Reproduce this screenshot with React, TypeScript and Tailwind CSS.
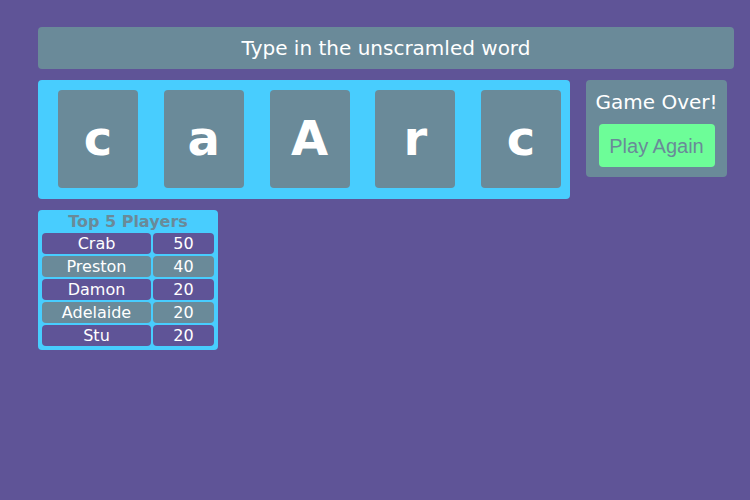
import { useState } from 'react';

const letters = ['c', 'a', 'A', 'r', 'c'];

const players = [
  { name: 'Crab', score: 50 },
  { name: 'Preston', score: 40 },
  { name: 'Damon', score: 20 },
  { name: 'Adelaide', score: 20 },
  { name: 'Stu', score: 20 },
];

export default function App() {
  const [tiles] = useState(letters);

  return (
    <div className="min-h-[500px] w-[750px] bg-[#5f5497] pl-[38px] pt-[27px] font-['DejaVu_Sans',sans-serif]">
      {/* Prompt bar */}
      <div className="flex h-[42px] w-[696px] items-center justify-center rounded-[4px] bg-[#6a8a99] text-[20px] text-white">
        Type in the unscramled word
      </div>

      <div className="mt-[11px] flex items-start gap-[16px]">
        {/* Scrambled letters */}
        <div className="flex h-[119px] w-[532px] items-start gap-[25.75px] rounded-[4px] bg-[#48cdfe] pl-[20px] pt-[10px]">
          {tiles.map((l, i) => (
            <div
              key={i}
              className="flex h-[98px] w-[80px] items-center justify-center rounded-[4px] bg-[#6a8a99] pb-[2px] text-[48px] font-bold text-white"
            >
              {l}
            </div>
          ))}
        </div>

        {/* Game over box */}
        <div className="flex h-[97px] w-[141px] flex-col items-center rounded-[4px] bg-[#6a8a99] pt-[10px]">
          <div className="text-[20px] leading-[24px] text-white">Game Over!</div>
          <button className="mt-[10px] h-[43px] w-[116px] rounded-[4px] bg-[#6dfd98] font-['Liberation_Sans',sans-serif] text-[20px] text-[#6a8a99]">
            Play Again
          </button>
        </div>
      </div>

      {/* Leaderboard */}
      <div className="mt-[11px] w-[180px] rounded-[4px] bg-[#48cdfe] px-[4px] pb-[4px] pt-[2px]">
        <div className="h-[19px] text-center text-[16px] font-bold leading-[19px] text-[#6a8a99]">
          Top 5 Players
        </div>
        <div className="mt-[2px] grid grid-cols-[109px_61px] gap-[2px]">
          {players.map((p, i) => {
            const bg = i % 2 === 0 ? 'bg-[#5f5497]' : 'bg-[#6a8a99]';
            return [
              <div key={p.name} className={`h-[21px] rounded-[4px] ${bg} text-center text-[16px] leading-[21px] text-white`}>
                {p.name}
              </div>,
              <div key={p.name + '-s'} className={`h-[21px] rounded-[4px] ${bg} text-center text-[16px] leading-[21px] text-white`}>
                {p.score}
              </div>,
            ];
          })}
        </div>
      </div>
    </div>
  );
}
